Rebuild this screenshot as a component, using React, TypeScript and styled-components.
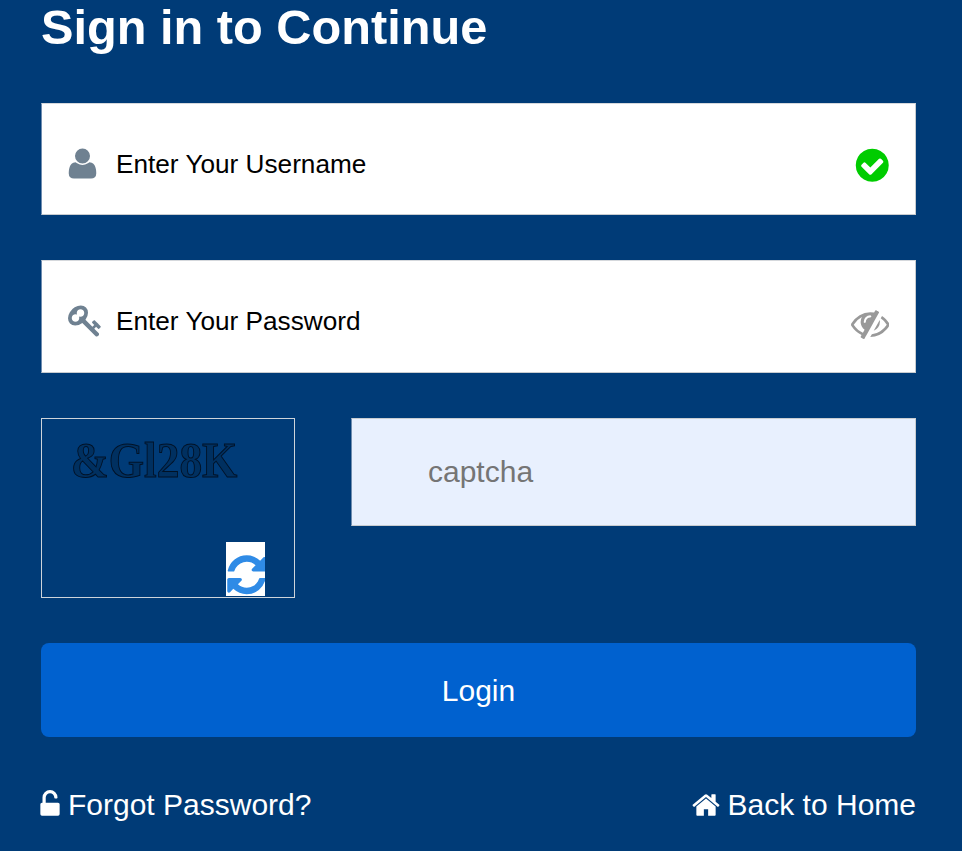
import React from "react";
import styled, { createGlobalStyle } from "styled-components";

const Global = createGlobalStyle`
  html, body { margin: 0; padding: 0; background: #003b77; }
  body { font-family: "Liberation Sans", Arial, sans-serif; }
  * { box-sizing: border-box; }
`;

const Page = styled.main`
  width: 962px;
  height: 851px;
  overflow: hidden;
  padding: 0 46px 0 41px;
  background: #003b77;
`;

const Title = styled.h1`
  margin: 0 0 48px;
  height: 55px;
  font-size: 48.7px;
  line-height: 55px;
  font-weight: 700;
  color: #fff;
`;

const Field = styled.label`
  display: flex;
  align-items: center;
  height: 112.4px;
  margin-bottom: 45px;
  padding: 0 27px 0 27px;
  background: #fff;
  border: 1px solid #c8ccd0;
  border-left-color: #6f8db0;
  border-top-color: #d5d8dc;
`;

const LeadIcon = styled.span<{ $top: number; $left: number }>`
  display: flex;
  width: 47px;
  flex: none;
  margin-top: ${(p) => p.$top}px;
  margin-left: ${(p) => p.$left}px;
  margin-right: ${(p) => -p.$left}px;
`;

const TextInput = styled.input`
  flex: 1;
  min-width: 0;
  border: 0;
  outline: 0;
  padding: 0;
  margin-top: 10px;
  background: transparent;
  font: 26.2px "Liberation Sans", Arial, sans-serif;
  color: #000;
  &::placeholder { color: #000; opacity: 1; }
`;

const TrailIcon = styled.span<{ $top: number; $right: number }>`
  display: flex;
  flex: none;
  margin-top: ${(p) => p.$top}px;
  margin-right: ${(p) => p.$right}px;
`;

const CaptchaRow = styled.div`
  display: flex;
  align-items: flex-start;
  gap: 56px;
  margin-bottom: 45px;
`;

const CaptchaBox = styled.div`
  position: relative;
  flex: none;
  width: 254px;
  height: 180px;
  border: 1px solid #cdd3da;
  padding: 14px 0 0 29px;
`;

const CaptchaText = styled.div`
  font-family: "Liberation Serif", "DejaVu Serif", serif;
  font-size: 51px;
  font-weight: 700;
  line-height: 54px;
  white-space: nowrap;
  color: #003060;
  -webkit-text-stroke: 1px #001226;
  filter: blur(0.7px);
  transform: scaleX(0.89);
  transform-origin: left;
`;

const Refresh = styled.button`
  position: absolute;
  left: 184px;
  top: 123px;
  width: 39px;
  height: 54px;
  padding: 10px 0 0;
  border: 0;
  background: #fff;
  display: flex;
  align-items: flex-start;
  justify-content: flex-start;
  overflow: hidden;
  svg { flex: none; margin-left: -2.5px; }
`;

const CaptchaInput = styled.input`
  flex: 1;
  min-width: 0;
  height: 108px;
  padding: 1px 0 0 76px;
  border: 1px solid #c8ccd0;
  border-left-color: #6f8db0;
  outline: 0;
  background: #e8f0fe;
  font: 30px "Liberation Sans", Arial, sans-serif;
  color: #000;
  &::placeholder { color: #757575; opacity: 1; }
`;

const LoginButton = styled.button`
  display: block;
  width: 100%;
  height: 94px;
  padding: 2px 0 0;
  border: 0;
  border-radius: 8px;
  background: #0061cf;
  color: #fff;
  font: 30px "Liberation Sans", Arial, sans-serif;
  margin-bottom: 46px;
`;

const Links = styled.nav`
  display: flex;
  justify-content: space-between;
  align-items: center;
`;

const FooterLink = styled.a<{ $gap: number }>`
  display: inline-flex;
  align-items: center;
  gap: ${(p) => p.$gap}px;
  color: #fff;
  text-decoration: none;
  font-size: 30px;
  line-height: 44px;
`;

const LockWrap = styled.span`
  display: flex;
  margin-left: -6px;
`;

const Glyph = ({ d, size, color }: { d: string; size: number; color: string }) => (
  <svg width={size} height={size} viewBox="0 0 1792 1792" fill={color} aria-hidden="true">
    <path d={d} />
  </svg>
);

const paths = {
  user: "M1600 1405q0 120-73 189.500t-194 69.500h-874q-121 0-194-69.500t-73-189.500q0-53 3.500-103.500t14-109 26.500-108.500 43-97.500 62-81 85.500-53.500 111.500-20q9 0 42 21.500t74.500 48 108 48 133.500 21.500 133.500-21.500 108-48 74.500-48 42-21.500q61 0 111.500 20t85.500 53.500 62 81 43 97.500 26.500 108.500 14 109 3.500 103.500zm-320-893q0 159-112.500 271.500t-271.500 112.500-271.500-112.500-112.500-271.500 112.500-271.500 271.500-112.500 271.500 112.500 112.500 271.500z",
  key: "M832 512q0-80-56-136t-136-56-136 56-56 136q0 42 19 83-41-19-83-19-80 0-136 56t-56 136 56 136 136 56 136-56 56-136q0-42-19-83 41 19 83 19 80 0 136-56t56-136zm851 704q0 17-49 66t-66 49q-9 0-28.500-16t-36.500-33-38.500-40-24.500-26l-96 96 220 220q28 28 28 68 0 42-39 81t-81 39q-40 0-68-28l-671-671q-176 131-365 131-163 0-265.500-102.500t-102.500-265.500q0-160 95-313t248-248 313-95q163 0 265.500 102.500t102.500 265.500q0 189-131 365l355 355 96-96q-3-3-26-24.500t-40-38.500-33-36.500-16-28.500q0-17 49-66t66-49q13 0 23 10 6 6 46 44.500t82 79.500 86.500 86 73 78 28.500 41z",
  check: "M1412 734q0-28-18-46l-91-90q-19-19-45-19t-45 19l-408 407-226-226q-19-19-45-19t-45 19l-91 90q-18 18-18 46 0 27 18 45l362 362q19 19 45 19 27 0 46-19l543-543q18-18 18-45zm252 162q0 209-103 385.500t-279.500 279.500-385.500 103-385.500-103-279.500-279.500-103-385.500 103-385.500 279.500-279.500 385.500-103 385.500 103 279.500 279.500 103 385.500z",
  eyeSlash: "M555 1335l78-141q-87-63-136-159t-49-203q0-121 61-225-229 117-381 353 167 258 427 375zm389-759q0-20-14-34t-34-14q-125 0-214.500 89.500t-89.500 214.500q0 20 14 34t34 14 34-14 14-34q0-86 61-147t147-61q20 0 34-14t14-34zm363-191q0 7-1 9-106 189-316 567t-315 566l-49 89q-10 16-28 16-12 0-134-70-16-10-16-28 0-12 44-87-143-65-263.500-173t-208.500-245q-20-31-20-69t20-69q153-235 380-371t496-136q89 0 180 17l54-97q10-16 28-16 5 0 18 6t31 15.500 33 18.500 31.500 18.500 19.500 11.500q16 10 16 27zm37 447q0 139-79 253.500t-209 164.500l280-502q8 45 8 84zm448 128q0 35-20 69-39 64-109 145-150 172-347.500 267t-419.500 95l74-132q212-18 392.500-137t301.500-307q-115-179-282-294l63-112q95 64 182.500 153t144.500 184q20 34 20 69z",
  refresh: "M1639 1056q0 5-1 7-64 268-268 434.500t-478 166.500q-146 0-282.500-55t-243.500-157l-129 129q-19 19-45 19t-45-19-19-45v-448q0-26 19-45t45-19h448q26 0 45 19t19 45-19 45l-137 137q71 66 161 102t187 36q134 0 250-65t186-179q11-17 53-117 8-23 30-23h192q13 0 22.500 9.500t9.500 22.500zm25-800v448q0 26-19 45t-45 19h-448q-26 0-45-19t-19-45 19-45l138-138q-148-137-349-137-134 0-250 65t-186 179q-11 17-53 117-8 23-30 23h-199q-13 0-22.500-9.500t-9.500-22.500v-7q65-268 270-434.500t480-166.500q146 0 284 55.500t245 156.500l130-129q19-19 45-19t45 19 19 45z",
  unlock: "M1376 768q40 0 68 28t28 68v576q0 40-28 68t-68 28h-960q-40 0-68-28t-28-68v-576q0-40 28-68t68-28h32v-320q0-185 131.500-316.500t316.500-131.500 316.500 131.500 131.500 316.500q0 26-19 45t-45 19h-64q-26 0-45-19t-19-45q0-106-75-181t-181-75-181 75-75 181v320h736z",
  home: "M1472 992v480q0 26-19 45t-45 19h-384v-384h-256v384h-384q-26 0-45-19t-19-45v-480q0-1 .5-3t.5-3l575-474 575 474q1 2 1 6zm223-69l-62 74q-8 9-21 11h-3q-13 0-21-7l-692-577-692 577q-12 8-24 7-13-2-21-11l-62-74q-8-10-7-23.500t11-21.500l719-599q32-26 76-26t76 26l244 204v-195q0-14 9-23t23-9h192q14 0 23 9t9 23v408l219 182q10 8 11 21.500t-7 23.500z",
};

export default function App() {
  return (
    <Page>
      <Global />
      <Title>Sign in to Continue</Title>
      <Field>
        <LeadIcon $top={8} $left={-4}><Glyph d={paths.user} size={35} color="#6f8191" /></LeadIcon>
        <TextInput placeholder="Enter Your Username" />
        <TrailIcon $top={13} $right={-3.5}><Glyph d={paths.check} size={38.5} color="#00cc00" /></TrailIcon>
      </Field>
      <Field>
        <LeadIcon $top={8} $left={-1}><Glyph d={paths.key} size={35} color="#6f8191" /></LeadIcon>
        <TextInput placeholder="Enter Your Password" />
        <TrailIcon $top={14} $right={-1}><Glyph d={paths.eyeSlash} size={38.5} color="#999999" /></TrailIcon>
      </Field>
      <CaptchaRow>
        <CaptchaBox>
          <CaptchaText>&amp;Gl28K</CaptchaText>
          <Refresh aria-label="Refresh captcha"><Glyph d={paths.refresh} size={45.5} color="#2f8be6" /></Refresh>
        </CaptchaBox>
        <CaptchaInput placeholder="captcha" />
      </CaptchaRow>
      <LoginButton>Login</LoginButton>
      <Links>
        <FooterLink href="#" $gap={3}><LockWrap><Glyph d={paths.unlock} size={30} color="#fff" /></LockWrap>Forgot Password?</FooterLink>
        <FooterLink href="#" $gap={7}><Glyph d={paths.home} size={30} color="#fff" />Back to Home</FooterLink>
      </Links>
    </Page>
  );
}
